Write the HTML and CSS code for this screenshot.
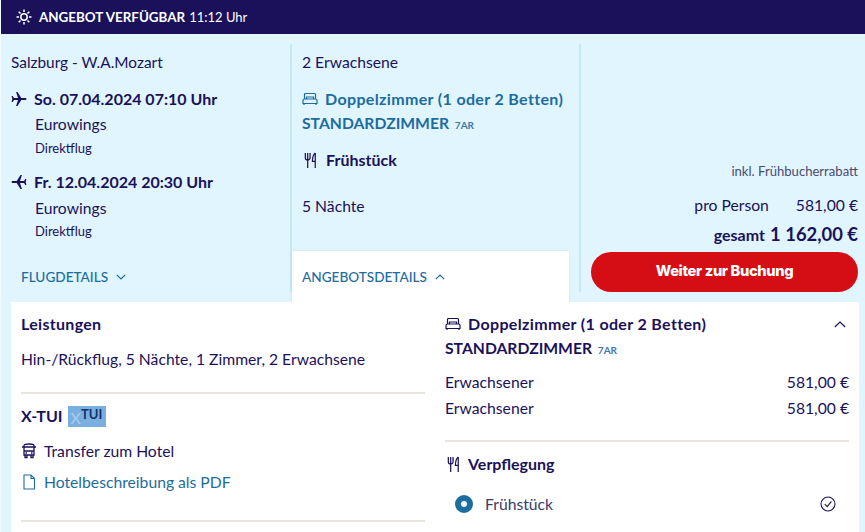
FILE: index.html
```html
<html>

<head>
<meta charset="utf-8">
<link rel="stylesheet" href="styles.css">
</head>

<body>
	<svg class="defs" width="0" height="0">
		<symbol id="bed" viewBox="0 0 16 14">
			<path d="M2.500 7V2.500a1 1 0 0 1 1-1h9a1 1 0 0 1 1 1V7M4.500 7V5h7v2M1 11.500V8.500a1.500 1.500 0 0 1 1.500-1.500h11A1.500 1.500 0 0 1 15 8.500v3zM2 11.500V13M14 11.500V13" fill="none" stroke="currentColor" stroke-width="1.200"/>
		</symbol>
		<symbol id="food" viewBox="0 0 14 18">
			<path d="M1 1v5a2.500 2.500 0 0 0 5 0V1M3.500 1v16M11.500 1v16M11.500 1C9.500 2.500 8.500 6 8.500 10h3" fill="none" stroke="currentColor" stroke-width="1.300"/>
		</symbol>
	</svg>

	<div class="topbar">
		<svg class="sun" viewBox="0 0 16 16" width="16" height="16">
			<circle cx="8" cy="8" r="3.200" fill="none" stroke="#fff" stroke-width="1.500"/>
			<path d="M8 0.500v2.500M8 13v2.500M0.500 8h2.500M13 8h2.500M2.700 2.700l1.800 1.800M11.500 11.500l1.800 1.800M2.700 13.300l1.800-1.800M11.500 4.500l1.800-1.800" stroke="#fff" stroke-width="1.500"/>
		</svg>
		<b>ANGEBOT VERFÜGBAR</b> <span class="time">11:12 Uhr</span>
	</div>

	<div class="summary">
		<div class="col col1">
			<div class="line first airport">Salzburg - W.A.Mozart</div>
			<div class="flight">
				<svg class="plane" viewBox="0 0 16 16" width="16" height="16"><path d="M15.500 8c0-.8-.8-1.100-1.600-1.100H10.300L6.500 1H5.100l1.900 5.900H3L1.700 5H.6l.7 3-.7 3h1.100L3 9.100h4L5.100 15h1.400l3.800-5.900h3.600c.8 0 1.600-.3 1.600-1.100z" fill="currentColor"/></svg>
				<b>So. 07.04.2024 07:10 Uhr</b>
			</div>
			<div class="line indent airline1">Eurowings</div>
			<div class="line indent small">Direktflug</div>
			<div class="flight second">
				<svg class="plane back" viewBox="0 0 16 16" width="16" height="16"><path d="M15.500 8c0-.8-.8-1.100-1.600-1.100H10.300L6.500 1H5.100l1.900 5.900H3L1.700 5H.6l.7 3-.7 3h1.100L3 9.100h4L5.100 15h1.400l3.800-5.900h3.600c.8 0 1.600-.3 1.600-1.100z" fill="currentColor"/></svg>
				<b>Fr. 12.04.2024 20:30 Uhr</b>
			</div>
			<div class="line indent airline2">Eurowings</div>
			<div class="line indent small direct2">Direktflug</div>
			<a class="toggle flugdetails" href="#">FLUGDETAILS
				<svg viewBox="0 0 10 6" width="10" height="6"><path d="M.8.800 5 5l4.200-4.200" fill="none" stroke="currentColor" stroke-width="1.200"/></svg>
			</a>
		</div>

		<div class="col col2">
			<div class="line first">2 Erwachsene</div>
			<div class="room blue">
				<svg class="ico"><use href="#bed"/></svg>
				<b>Doppelzimmer (1 oder 2 Betten)</b>
			</div>
			<div class="std blue">STANDARDZIMMER <small>7AR</small></div>
			<div class="meal">
				<svg class="ico fork"><use href="#food"/></svg>
				<b>Frühstück</b>
			</div>
			<div class="line nights">5 Nächte</div>
			<a class="toggle tab" href="#">ANGEBOTSDETAILS
				<svg viewBox="0 0 10 6" width="10" height="6"><path d="M.8 5.200 5 1l4.200 4.200" fill="none" stroke="currentColor" stroke-width="1.200"/></svg>
			</a>
		</div>

		<div class="col col3">
			<div class="rabatt">inkl. Frühbucherrabatt</div>
			<div class="price"><span>pro Person</span><span class="val">581,00 €</span></div>
			<div class="total"><b>gesamt</b> <strong>1 162,00 €</strong></div>
			<button class="book">Weiter zur Buchung</button>
		</div>
	</div>

	<div class="details">
		<div class="dcol">
			<h4>Leistungen</h4>
			<div class="line gap1">Hin-/Rückflug, 5 Nächte, 1 Zimmer, 2 Erwachsene</div>
			<hr class="rule r1">
			<div class="xtui"><b>X-TUI</b> <span class="badge"><i>X</i>TUI</span></div>
			<div class="item transfer">
				<svg class="ico16" viewBox="0 0 16 16"><path d="M1 4h1.500M13.500 4H15M3 2.500C3 1.700 5 1 8 1s5 .7 5 1.500V12H3zM3 8h10M3 4h10M4 12v2.500h2V12M10 12v2.500h2V12" fill="none" stroke="currentColor" stroke-width="1.300"/><path d="M4.500 10h1.500M10 10h1.500" stroke="currentColor" stroke-width="1.300"/></svg>
				Transfer zum Hotel
			</div>
			<a class="item link" href="#">
				<svg class="ico16" viewBox="0 0 16 16"><path d="M3 1h7l3.500 3.500V15H3zM10 1v3.500h3.500" fill="none" stroke="currentColor" stroke-width="1.100"/></svg>
				Hotelbeschreibung als PDF
			</a>
			<hr class="rule r2">
		</div>
		<div class="dcol">
			<div class="room head">
				<svg class="ico"><use href="#bed"/></svg>
				<b>Doppelzimmer (1 oder 2 Betten)</b>
				<svg class="up" viewBox="0 0 12 7" width="12" height="7"><path d="M.8 6 6 1l5.200 5" fill="none" stroke="currentColor" stroke-width="1.200"/></svg>
			</div>
			<div class="std">STANDARDZIMMER <small>7AR</small></div>
			<div class="price row first-row"><span>Erwachsener</span><span>581,00 €</span></div>
			<div class="price row"><span>Erwachsener</span><span>581,00 €</span></div>
			<hr class="rule r3">
			<div class="meal verpf">
				<svg class="ico fork"><use href="#food"/></svg>
				<b>Verpflegung</b>
			</div>
			<div class="choice">
				<span class="radio"></span>
				<span class="choice-name">Frühstück</span>
				<svg viewBox="0 0 16 16" width="16" height="16"><circle cx="8" cy="8" r="7" fill="none" stroke="currentColor" stroke-width="1.100"/><path d="M4.800 8.200 7.200 10.600 11.400 5.400" fill="none" stroke="currentColor" stroke-width="1.100"/></svg>
			</div>
		</div>
	</div>
</body>

</html>
```

FILE: styles.css
```css
body {
	margin: 0;
	border-left: 1px solid #f2fbff;
	height: 532px;
	overflow: hidden;
	background-color: #e1f5fe;
	color: #1a115a;
	font-family: "Lato", "Noto Sans", sans-serif;
	font-size: 15.7px;
	line-height: 24px;
}

.defs {
	display: block;
	height: 0;
}

a {
	text-decoration: none;
}

.topbar {
	display: flex;
	align-items: center;
	height: 34px;
	padding-left: 15px;
	background-color: #1a115a;
	color: white;
	font-size: 13px;
}

.topbar b {
	margin: 0 4px 0 7px;
	font-size: 13.4px;
}

.time {
	font-size: 13px;
}

.summary {
	display: flex;
	padding: 10px 0;
	height: 248px;
}

.col {
	display: flex;
	flex-direction: column;
	box-sizing: border-box;
	height: 248px;
}

.col1 {
	width: 289px;
	padding-left: 10px;
}

.col2 {
	width: 289px;
	padding-left: 10px;
	border-left: 2px solid #c5e7fb;
}

.col3 {
	width: 279px;
	padding-left: 10px;
	border-left: 2px solid #c5e7fb;
	align-items: stretch;
}

.line.first {
	margin-top: 6px;
}

.airport {
	font-size: 15.4px;
}

.flight {
	display: flex;
	align-items: center;
	margin-top: 13px;
	font-size: 16px;
}

.flight.second {
	margin-top: 10px;
}

.plane {
	margin-right: 7px;
}

.plane.back {
	transform: rotate(180deg);
}

.indent {
	margin-left: 24px;
}

.airline1 {
	margin-top: 1px;
}

.line.small {
	font-size: 13px;
}

.airline2 {
	margin-top: 2px;
}

.line.direct2 {
	margin-top: -1px;
}

.toggle {
	display: flex;
	align-items: center;
	color: #1c6ca0;
	font-size: 13.6px;
	font-weight: 500;
}

.toggle svg {
	margin-left: 8px;
}

.flugdetails {
	margin-top: auto;
	margin-left: 10px;
	margin-bottom: 3px;
}

.room {
	display: flex;
	align-items: center;
	margin-top: 13px;
	font-size: 16px;
	letter-spacing: 0.35px;
}

.blue {
	color: #1c6ca0;
}

.ico {
	width: 16px;
	height: 14px;
	margin-right: 7px;
}

.ico.fork {
	width: 14px;
	height: 17px;
	margin: 0 8px 0 2px;
}

.std {
	font-weight: 700;
}

.std small {
	font-size: 10px;
	color: #3d78a8;
	margin-left: 2px;
}

.meal {
	display: flex;
	align-items: center;
	margin-top: 11px;
	font-size: 16px;
}

.nights {
	margin-top: 22px;
}

.tab {
	margin: auto 0 -10px -10px;
	padding-left: 10px;
	width: 277px;
	height: 51px;
	box-sizing: border-box;
	background-color: white;
	box-shadow: 0 0 3px rgba(0, 0, 0, 0.08);
	position: relative;
}

.rabatt {
	margin-top: auto;
	text-align: right;
	font-size: 13.1px;
	color: #4a4a72;
}

.price {
	display: flex;
	justify-content: flex-end;
}

.col3 .price {
	margin: 10px 0 0 0;
}

.val {
	margin-left: 27px;
}

.total {
	text-align: right;
	margin: 5px 0 5px;
	font-size: 16px;
}

.total strong {
	font-size: 18.4px;
	font-weight: 700;
	margin-left: 1px;
}

.book {
	height: 40px;
	width: 267px;
	padding-bottom: 3px;
	border: none;
	border-radius: 20px;
	background-color: #d40e14;
	color: white;
	font-family: "Inter", sans-serif;
	font-size: 14.7px;
	font-weight: 800;
	letter-spacing: -0.35px;
}

.details {
	display: flex;
	gap: 20px;
	box-sizing: border-box;
	width: 848px;
	height: 240px;
	margin-left: 10px;
	padding: 10px 10px 0;
	background-color: white;
	position: relative;
}

.dcol {
	width: 404px;
}

h4 {
	margin: 0;
	font-size: 16px;
	font-weight: 700;
	letter-spacing: 0.3px;
}

.gap1 {
	margin-top: 11px;
}

.rule {
	border: none;
	height: 2px;
	background-color: #e8e4de;
	margin: 0;
}

.r1 {
	margin-top: 21px;
}

.xtui {
	display: flex;
	align-items: center;
	margin-top: 10px;
	font-size: 16px;
}

.badge {
	width: 38px;
	height: 21px;
	margin-left: 5px;
	background-color: #7ab0e0;
	color: #14306a;
	font-size: 13px;
	font-weight: 700;
	line-height: 16px;
	display: flex;
	box-sizing: border-box;
	padding-left: 3px;
}

.badge i {
	font-style: normal;
	font-weight: 400;
	font-size: 16px;
	line-height: 24px;
	color: #a8cdf0;
}

.item {
	display: flex;
	align-items: center;
	margin-top: 7px;
}

.transfer {
	margin-top: 11px;
}

.ico16 {
	width: 16px;
	height: 16px;
	margin-right: 7px;
}

.link {
	color: #1c6ca0;
}

.r2 {
	margin-top: 26px;
}

.room.head {
	margin-top: 0;
}

.up {
	margin-left: auto;
	margin-right: 3px;
}

.row {
	justify-content: space-between;
	margin-top: 2px;
}

.first-row {
	margin-top: 8px;
}

.r3 {
	margin-top: 20px;
}

.meal.verpf {
	margin-top: 10px;
}

.verpf .ico.fork {
	margin-right: 7px;
}

.choice {
	display: flex;
	align-items: center;
	margin-top: 16px;
	padding: 0 13px 0 10px;
}

.radio {
	box-sizing: border-box;
	width: 18px;
	height: 18px;
	border-radius: 50%;
	border: 6px solid #1c6ca0;
	margin-right: 12px;
}

.choice-name {
	flex: 1;
	color: #3a3a68;
}
```
